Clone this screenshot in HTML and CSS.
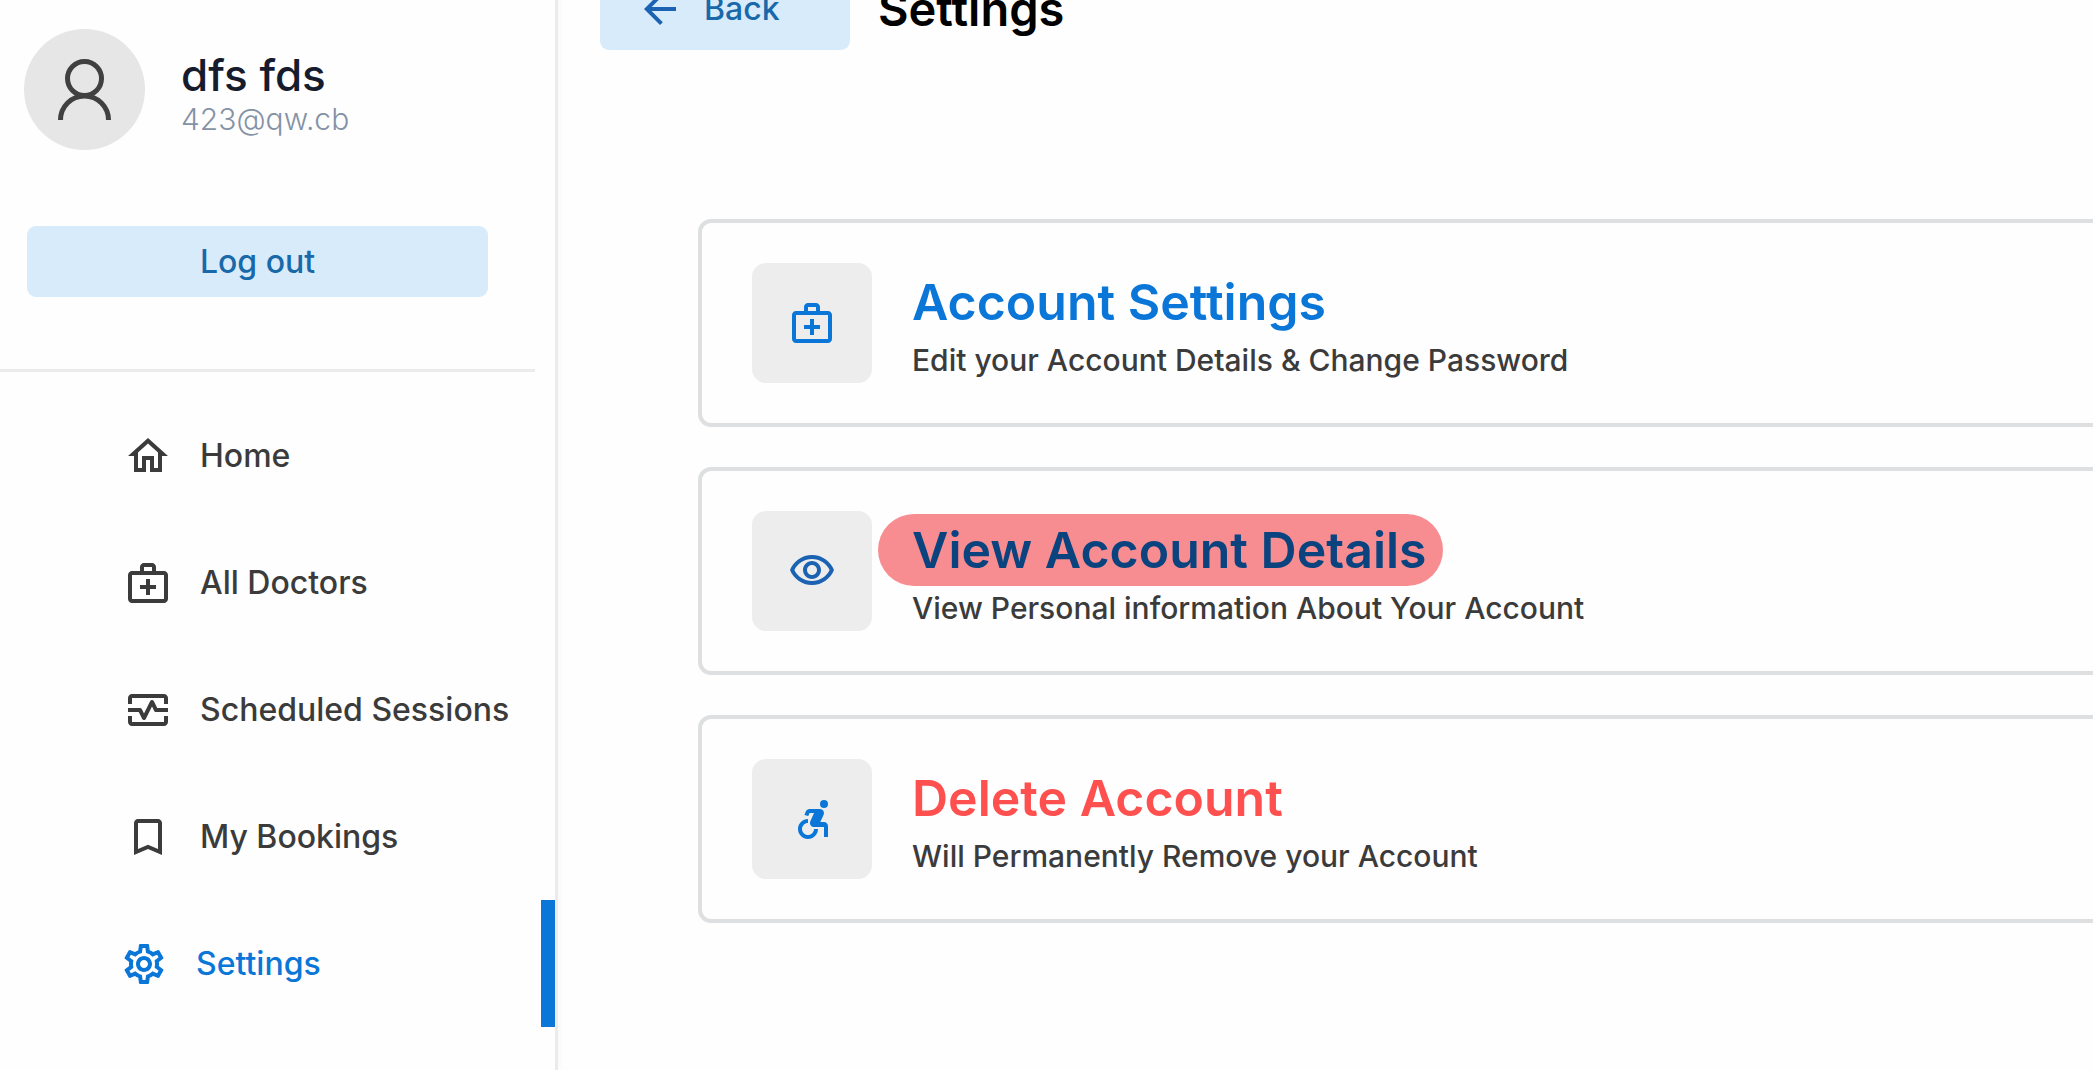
FILE: index.html
```html
<!DOCTYPE html>
<html lang="en">
<head>
<meta charset="utf-8">
<meta name="viewport" content="width=device-width, initial-scale=1">
<title>Settings</title>
<link rel="stylesheet" href="styles.css">
</head>
<body>
<div class="layout">
  <aside class="sidebar">
    <div class="profile">
      <div class="avatar">
        <svg viewBox="0 0 121 121" fill="none" stroke="#404040" stroke-width="5"><circle cx="60.5" cy="49.5" r="17"/><path d="M36.5 91a24 24 0 0 1 48 0"/></svg>
      </div>
      <div class="identity">
        <p class="name">dfs fds</p>
        <p class="email">423@qw.cb</p>
      </div>
    </div>
    <button class="soft-button logout" type="button">Log out</button>
    <hr class="divider">
    <nav class="menu">
      <a class="menu-item" href="#home"><svg class="icon" viewBox="0 0 24 24"><path d="M12 5.69l5 4.5V18h-2v-6H9v6H7v-7.81l5-4.5M12 3L2 12h3v8h6v-6h2v6h6v-8h3L12 3z"/></svg>Home</a>
      <a class="menu-item" href="#doctors"><svg class="icon" viewBox="0 0 24 24"><path d="M20 6h-4V4c0-1.1-.9-2-2-2h-4c-1.1 0-2 .9-2 2v2H4c-1.1 0-2 .9-2 2v12c0 1.1.9 2 2 2h16c1.1 0 2-.9 2-2V8c0-1.1-.9-2-2-2zM10 4h4v2h-4V4zm10 16H4V8h16v12z"/><path d="M13 10h-2v3H8v2h3v3h2v-3h3v-2h-3z"/></svg>All Doctors</a>
      <a class="menu-item" href="#sessions"><svg class="icon" viewBox="0 0 24 24"><path d="M20 4H4c-1.1 0-2 .9-2 2v3h2V6h16v3h2V6c0-1.1-.9-2-2-2zM20 18H4v-3H2v3c0 1.1.9 2 2 2h16c1.1 0 2-.9 2-2v-3h-2v3z"/><path d="M14.89 7.55c-.34-.68-1.45-.68-1.79 0L10 13.76l-1.11-2.21C8.72 11.21 8.38 11 8 11H2v2h5.38l1.72 3.45c.18.34.52.55.9.55s.72-.21.89-.55L14 10.24l1.11 2.21c.17.34.51.55.89.55h6v-2h-5.38l-1.73-3.45z"/></svg>Scheduled Sessions</a>
      <a class="menu-item" href="#bookings"><svg class="icon" viewBox="0 0 24 24"><path d="M17 3H7c-1.1 0-1.99.9-1.99 2L5 21l7-3 7 3V5c0-1.1-.9-2-2-2zm0 15l-5-2.18L7 18V5h10v13z"/></svg>My Bookings</a>
      <a class="menu-item active" href="#settings" aria-current="page"><svg class="icon" viewBox="0 0 24 24"><path d="M19.43 12.98c.04-.32.07-.64.07-.98 0-.34-.03-.66-.07-.98l2.11-1.65c.19-.15.24-.42.12-.64l-2-3.46c-.09-.16-.26-.25-.44-.25-.06 0-.12.01-.17.03l-2.49 1c-.52-.4-1.08-.73-1.69-.98l-.38-2.65C14.46 2.18 14.25 2 14 2h-4c-.25 0-.46.18-.49.42l-.38 2.65c-.61.25-1.17.59-1.69.98l-2.49-1c-.06-.02-.12-.03-.18-.03-.17 0-.34.09-.43.25l-2 3.46c-.13.22-.07.49.12.64l2.11 1.65c-.04.32-.07.65-.07.98s.03.66.07.98l-2.11 1.65c-.19.15-.24.42-.12.64l2 3.46c.09.16.26.25.44.25.06 0 .12-.01.17-.03l2.49-1c.52.4 1.08.73 1.69.98l.38 2.65c.03.24.24.42.49.42h4c.25 0 .46-.18.49-.42l.38-2.65c.61-.25 1.17-.59 1.69-.98l2.49 1c.06.02.12.03.18.03.17 0 .34-.09.43-.25l2-3.46c.12-.22.07-.49-.12-.64l-2.11-1.65zm-1.98-1.71c.04.31.05.52.05.73 0 .21-.02.43-.05.73l-.14 1.13.89.7 1.08.84-.7 1.21-1.27-.51-1.04-.42-.9.68c-.43.32-.84.56-1.25.73l-1.06.43-.16 1.13-.2 1.35h-1.4l-.19-1.35-.16-1.13-1.06-.43c-.43-.18-.83-.41-1.23-.71l-.91-.7-1.06.43-1.27.51-.7-1.21 1.08-.84.89-.7-.14-1.13c-.03-.31-.05-.54-.05-.74s.02-.43.05-.73l.14-1.13-.89-.7-1.08-.84.7-1.21 1.27.51 1.04.42.9-.68c.43-.32.84-.56 1.25-.73l1.06-.43.16-1.13.2-1.35h1.39l.19 1.35.16 1.13 1.06.43c.43.18.83.41 1.23.71l.91.7 1.06-.43 1.27-.51.7 1.21-1.07.85-.89.7.14 1.13zM12 8c-2.21 0-4 1.79-4 4s1.79 4 4 4 4-1.79 4-4-1.79-4-4-4zm0 6c-1.1 0-2-.9-2-2s.9-2 2-2 2 .9 2 2-.9 2-2 2z"/></svg>Settings</a>
    </nav>
  </aside>
  <main class="content">
    <header class="topbar">
      <button class="soft-button back" type="button"><svg class="icon back-icon" viewBox="0 0 24 24"><path d="M20 11H7.83l5.59-5.59L12 4l-8 8 8 8 1.41-1.41L7.83 13H20v-2z"/></svg>Back</button>
      <h1 class="page-title">Settings</h1>
    </header>
    <div class="cards">
      <a class="card" href="#edit">
        <span class="tile"><svg class="icon" viewBox="0 0 24 24"><path d="M20 6h-4V4c0-1.1-.9-2-2-2h-4c-1.1 0-2 .9-2 2v2H4c-1.1 0-2 .9-2 2v12c0 1.1.9 2 2 2h16c1.1 0 2-.9 2-2V8c0-1.1-.9-2-2-2zM10 4h4v2h-4V4zm10 16H4V8h16v12z"/><path d="M13 10h-2v3H8v2h3v3h2v-3h3v-2h-3z"/></svg></span>
        <span class="card-text"><span class="card-title">Account Settings</span><span class="card-note">Edit your Account Details &amp; Change Password</span></span>
      </a>
      <a class="card" href="#view">
        <span class="tile tile-view"><svg class="icon" viewBox="0 0 24 24"><path d="M12 6c3.79 0 7.17 2.13 8.82 5.5C19.17 14.87 15.79 17 12 17s-7.17-2.13-8.82-5.5C4.83 8.13 8.21 6 12 6m0-2C7 4 2.73 7.11 1 11.5 2.73 15.89 7 19 12 19s9.27-3.11 11-7.5C21.27 7.11 17 4 12 4zm0 5c1.38 0 2.5 1.12 2.5 2.5S13.38 14 12 14s-2.5-1.12-2.5-2.5S10.62 9 12 9m0-2c-2.48 0-4.5 2.02-4.5 4.5S9.52 16 12 16s4.5-2.02 4.5-4.5S14.48 7 12 7z"/></svg></span>
        <span class="card-text"><span class="card-title marked">View Account Details</span><span class="card-note">View Personal information About Your Account</span></span>
      </a>
      <a class="card" href="#delete">
        <span class="tile"><svg class="icon" viewBox="0 0 24 24"><circle cx="18" cy="4.54" r="2"/><path d="M15 17h-2c0 1.65-1.35 3-3 3s-3-1.35-3-3 1.35-3 3-3v-2c-2.76 0-5 2.24-5 5s2.24 5 5 5 5-2.24 5-5zm3-3.5h-1.86l1.67-3.67C18.42 8.5 17.44 7 15.96 7h-5.2c-.81 0-1.54.47-1.87 1.2L8.22 10l1.92.53.65-1.53H13l-1.83 4.1c-.6 1.33.39 2.9 1.85 2.9H18v5h2v-5.5c0-1.1-.9-2-2-2z"/></svg></span>
        <span class="card-text"><span class="card-title danger">Delete Account</span><span class="card-note">Will Permanently Remove your Account</span></span>
      </a>
    </div>
  </main>
</div>
</body>
</html>
```
FILE: styles.css
```css
* {
  box-sizing: border-box;
}

body {
  margin: 0;
  background: #fefefe;
  color: #3b3b3b;
  font-family: Inter, "Liberation Sans", sans-serif;
  overflow: hidden;
}

p, h1 {
  margin: 0;
}

.layout {
  display: flex;
  min-height: 100vh;
}

.sidebar {
  flex: 0 0 558px;
  border-right: 3px solid #ebebeb;
}

.profile {
  display: flex;
  align-items: center;
  gap: 36px;
  padding: 29px 24px 0;
}

.avatar {
  width: 121px;
  height: 121px;
  border-radius: 50%;
  background: #e6e6e6;
}

.avatar svg {
  display: block;
}

.identity {
  padding-top: 6px;
}

.name {
  color: #161c2d;
  font-size: 44px;
  font-weight: 500;
  line-height: 52px;
}

.email {
  color: #8492a6;
  font-size: 30px;
  font-weight: 300;
  line-height: 36px;
}

.soft-button {
  height: 71px;
  border: 0;
  border-radius: 9px;
  background: #d8ebfa;
  color: #1969aa;
  font: 500 32px/40px Inter, "Liberation Sans", sans-serif;
}

.logout {
  display: block;
  width: 461px;
  margin: 76px 0 0 27px;
}

.divider {
  width: 535px;
  height: 3px;
  margin: 72px 0 20px;
  border: 0;
  background: #ebebeb;
}

.icon {
  flex: none;
  width: 48px;
  height: 48px;
  fill: currentColor;
}

.menu-item {
  display: flex;
  align-items: center;
  gap: 28px;
  height: 127px;
  padding-left: 124px;
  color: #3b3b3b;
  font-size: 32px;
  font-weight: 500;
  text-decoration: none;
}

.menu-item.active {
  padding-left: 120px;
  border-right: 14px solid #0a76d8;
  color: #0a76d8;
}

.content {
  flex: 1;
  min-width: 0;
  border-left: 4px solid #fbfbfb;
}

.topbar {
  display: flex;
  align-items: center;
  gap: 28px;
  margin-top: -21px;
  padding-left: 38px;
}

.back {
  display: flex;
  align-items: center;
  gap: 20px;
  width: 250px;
  padding: 0 36px 12px;
}

.back-icon {
  color: #1b62b3;
}

.page-title {
  padding-bottom: 12px;
  color: #000;
  font-size: 47px;
  font-weight: 600;
  line-height: 56px;
}

.cards {
  display: grid;
  gap: 40px;
  margin: 169px -20px 0 136px;
}

.card {
  display: flex;
  align-items: center;
  gap: 40px;
  height: 208px;
  padding: 0 50px;
  border: 4px solid #dddfe1;
  border-radius: 13px;
  color: #3b3b3b;
  text-decoration: none;
}

.tile {
  display: grid;
  place-items: center;
  width: 120px;
  height: 120px;
  border-radius: 14px;
  background: #ededed;
  color: #0a76d8;
}

.tile-view {
  color: #1b62b3;
}

.card-text {
  display: flex;
  flex-direction: column;
  align-items: flex-start;
  gap: 2px;
}

.card-title {
  color: #0a76d8;
  font-size: 50px;
  font-weight: 600;
  line-height: 72px;
}

.card-title.danger {
  color: #ff5050;
}

.card-title.marked {
  margin-left: -34px;
  padding: 0 16px 0 34px;
  border-radius: 36px;
  background: #f78d91;
  color: #0b437f;
}

.card-note {
  font-size: 30px;
  font-weight: 500;
  line-height: 40px;
}
```
